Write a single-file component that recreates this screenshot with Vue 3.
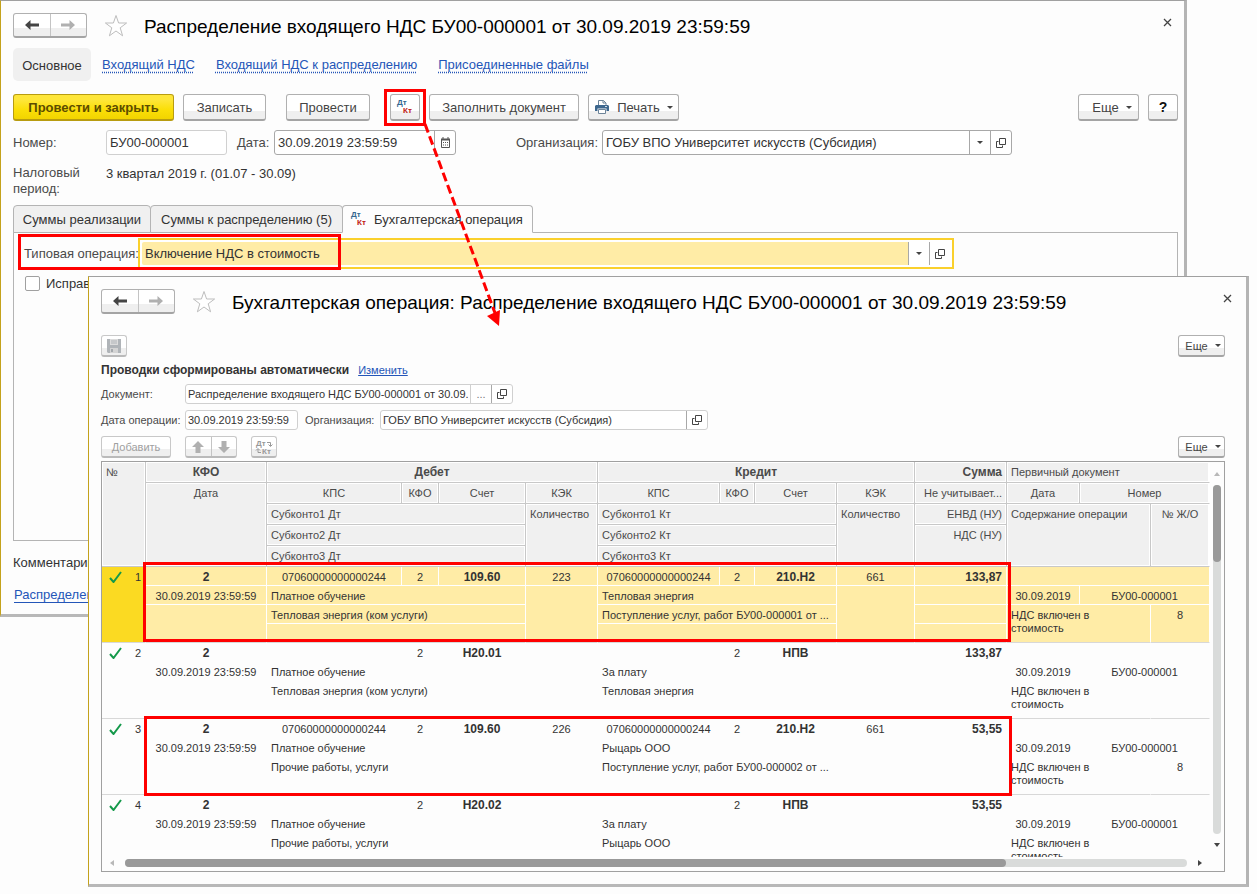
<script setup>
const head = {
  fund: 'КФО',
  sub: ['КПС', 'КФО', 'Счет', 'КЭК'],
}

const rows = [
  {
    n: 1, selected: true, kps: '07060000000000244', dt: '109.60', dtKek: '223', dt1: 'Платное обучение', dt2: 'Тепловая энергия (ком услуги)',
    kt: '210.Н2', ktKek: '661', kt1: 'Тепловая энергия', kt2: 'Поступление услуг, работ БУ00-000001 от ...', sum: '133,87', journal: '8',
  },
  {
    n: 2, kps: '', dt: 'Н20.01', dtKek: '', dt1: 'Платное обучение', dt2: 'Тепловая энергия (ком услуги)',
    kt: 'НПВ', ktKek: '', kt1: 'За плату', kt2: 'Тепловая энергия', sum: '133,87', journal: '',
  },
  {
    n: 3, kps: '07060000000000244', dt: '109.60', dtKek: '226', dt1: 'Платное обучение', dt2: 'Прочие работы, услуги',
    kt: '210.Н2', ktKek: '661', kt1: 'Рыцарь ООО', kt2: 'Поступление услуг, работ БУ00-000002 от ...', sum: '53,55', journal: '8',
  },
  {
    n: 4, kps: '', dt: 'Н20.02', dtKek: '', dt1: 'Платное обучение', dt2: 'Прочие работы, услуги',
    kt: 'НПВ', ktKek: '', kt1: 'За плату', kt2: 'Рыцарь ООО', sum: '53,55', journal: '',
  },
]
</script>

<template>
  <main class="desktop">
    <section class="window back">
      <header class="titlebar">
        <div class="history">
          <button type="button" aria-label="Назад"><svg width="16" height="12" viewBox="0 0 16 12"><path d="M1 6 6.500 1v3.500H15v3H6.500V11z" fill="#444" /></svg></button>
          <button type="button" aria-label="Вперед"><svg width="16" height="12" viewBox="0 0 16 12"><path d="M15 6 9.500 1v3.500H1v3h8.500V11z" fill="#b0b0b0" /></svg></button>
        </div>
        <button type="button" class="plain star" aria-label="В избранное"><svg width="24" height="24" viewBox="0 0 24 24"><path d="M12 1.500 14.600 9h8l-6.400 4.800 2.400 8L12 17l-6.600 4.800 2.400-8L1.400 9h8z" fill="#fff" stroke="#bdbdbd" /></svg></button>
        <h1>Распределение входящего НДС БУ00-000001 от 30.09.2019 23:59:59</h1>
        <button type="button" class="plain close" aria-label="Закрыть"><svg width="9" height="9" viewBox="0 0 9 9"><path d="M1 1l7 7M8 1 1 8" stroke="#444" stroke-width="1.300" /></svg></button>
      </header>

      <nav class="sections">
        <a class="current" href="#main">Основное</a>
        <a href="#vat">Входящий НДС</a>
        <a href="#split">Входящий НДС к распределению</a>
        <a href="#files">Присоединенные файлы</a>
      </nav>

      <div class="commands">
        <button type="button" class="btn primary">Провести и закрыть</button>
        <button type="button" class="btn save">Записать</button>
        <button type="button" class="btn post">Провести</button>
        <button type="button" class="btn dtkt" aria-label="Дт Кт">
          <svg width="20" height="20" viewBox="0 0 20 20"><text x="2" y="8" fill="#33678f">Дт</text><text x="8" y="16" fill="#c02010">Кт</text></svg>
          <span class="mark" />
        </button>
        <button type="button" class="btn fill">Заполнить документ</button>
        <button type="button" class="btn print">
          <svg width="16" height="16" viewBox="0 0 16 16"><path d="M4.500 6V1.500h5L12 4v2" fill="#fff" stroke="#6d8499" /><path d="M9 1.500V4h3" fill="none" stroke="#6d8499" /><path d="M2 6h12l1 1v5h-2.500V9.500h-9V12H1V7z" fill="#3d678e" /><path d="M11 7.500h2" stroke="#cfdce8" /><path d="M4.500 10.500h7v4h-7z" fill="#fff" stroke="#6d8499" /></svg>
          Печать <i class="caret" />
        </button>
        <button type="button" class="btn more">Еще <i class="caret" /></button>
        <button type="button" class="btn help">?</button>
      </div>

      <div class="line">
        <label class="caption" for="number">Номер:</label>
        <input id="number" class="box number" value="БУ00-000001" readonly>
        <label class="date-label" for="date">Дата:</label>
        <div class="box combo date">
          <input id="date" value="30.09.2019 23:59:59">
          <button type="button" aria-label="Календарь"><svg width="11" height="11" viewBox="0 0 11 11"><path d="M1.500 2.500h8v8h-8z" fill="#fff" stroke="#555" /><path d="M1 2.500h9" stroke="#555" stroke-width="2" /><path d="M3 0v2M8 0v2" stroke="#555" /><path d="M3 5.500h5M3 8h5" stroke="#555" stroke-dasharray="1 1" /></svg></button>
        </div>
        <label class="org-label" for="org">Организация:</label>
        <div class="box combo org">
          <input id="org" value="ГОБУ ВПО Университет искусств (Субсидия)">
          <button type="button" aria-label="Выбрать"><i class="caret" /></button>
          <button type="button" aria-label="Открыть"><svg width="10" height="10" viewBox="0 0 10 10"><path d="M3.500.500h6v6h-6zM2.500 3.500h-2v6h6v-2" fill="none" stroke="#444" /></svg></button>
        </div>
      </div>

      <div class="period">
        <span class="caption">Налоговый период:</span>
        <span class="value">3 квартал 2019 г. (01.07 - 30.09)</span>
      </div>

      <div class="tabs" role="tablist">
        <button type="button" role="tab" class="t1">Суммы реализации</button>
        <button type="button" role="tab" class="t2">Суммы к распределению (5)</button>
        <button type="button" role="tab" class="t3 on"><svg width="20" height="20" viewBox="0 0 20 20"><text x="1" y="8" fill="#33678f">Дт</text><text x="7" y="16" fill="#c02010">Кт</text></svg>Бухгалтерская операция</button>
      </div>
      <div class="panel">
        <div class="operation">
          <label for="operation">Типовая операция:</label>
          <div class="focused">
            <input id="operation" value="Включение НДС в стоимость">
            <button type="button" aria-label="Выбрать"><i class="caret" /></button>
            <button type="button" aria-label="Открыть"><svg width="10" height="10" viewBox="0 0 10 10"><path d="M3.500.500h6v6h-6zM2.500 3.500h-2v6h6v-2" fill="none" stroke="#444" /></svg></button>
          </div>
          <span class="mark" />
        </div>
        <label class="check"><input type="checkbox">Исправление</label>
      </div>
      <div class="comment">Комментарий:</div>
      <a class="footer-link" href="#doc">Распределение</a>
    </section>

    <section class="window front">
      <header class="titlebar">
        <div class="history">
          <button type="button" aria-label="Назад"><svg width="16" height="12" viewBox="0 0 16 12"><path d="M1 6 6.500 1v3.500H15v3H6.500V11z" fill="#444" /></svg></button>
          <button type="button" aria-label="Вперед"><svg width="16" height="12" viewBox="0 0 16 12"><path d="M15 6 9.500 1v3.500H1v3h8.500V11z" fill="#b0b0b0" /></svg></button>
        </div>
        <button type="button" class="plain star" aria-label="В избранное"><svg width="24" height="24" viewBox="0 0 24 24"><path d="M12 1.500 14.600 9h8l-6.400 4.800 2.400 8L12 17l-6.600 4.800 2.400-8L1.400 9h8z" fill="#fff" stroke="#bdbdbd" /></svg></button>
        <h2>Бухгалтерская операция: Распределение входящего НДС БУ00-000001 от 30.09.2019 23:59:59</h2>
        <button type="button" class="plain close" aria-label="Закрыть"><svg width="9" height="9" viewBox="0 0 9 9"><path d="M1 1l7 7M8 1 1 8" stroke="#444" stroke-width="1.300" /></svg></button>
      </header>

      <div class="tools first">
        <button type="button" class="btn icon off" aria-label="Записать"><svg width="14" height="14" viewBox="0 0 14 14"><path d="M0 0h14v14H1l-1-1z" fill="#b0b4b8" /><path d="M3 0h8v6H3z" fill="#dcdcdc" /><path d="M4 2h6M4 4h6" stroke="#b0b4b8" /><path d="M3 9h8v5H3z" fill="#d4d4d4" /><path d="M4 10h2v3H4z" fill="#a4a8ac" /></svg></button>
        <button type="button" class="btn more">Еще <i class="caret" /></button>
      </div>

      <div class="status"><strong>Проводки сформированы автоматически</strong><a href="#edit">Изменить</a></div>

      <div class="line">
        <label class="caption" for="doc">Документ:</label>
        <div class="box combo doc">
          <input id="doc" value="Распределение входящего НДС БУ00-000001 от 30.09." readonly>
          <button type="button" class="dots" aria-label="Выбрать">...</button>
          <button type="button" aria-label="Открыть"><svg width="10" height="10" viewBox="0 0 10 10"><path d="M3.500.500h6v6h-6zM2.500 3.500h-2v6h6v-2" fill="none" stroke="#444" /></svg></button>
        </div>
      </div>
      <div class="line">
        <label class="caption" for="opdate">Дата операции:</label>
        <input id="opdate" class="box opdate" value="30.09.2019 23:59:59" readonly>
        <label class="org-label" for="oporg">Организация:</label>
        <div class="box combo org">
          <input id="oporg" value="ГОБУ ВПО Университет искусств (Субсидия)" readonly>
          <button type="button" aria-label="Открыть"><svg width="10" height="10" viewBox="0 0 10 10"><path d="M3.500.500h6v6h-6zM2.500 3.500h-2v6h6v-2" fill="none" stroke="#444" /></svg></button>
        </div>
      </div>

      <div class="tools second">
        <button type="button" class="btn add off">Добавить</button>
        <div class="movers">
          <button type="button" aria-label="Вверх"><svg width="12" height="12" viewBox="0 0 12 12"><path d="M6 0l6 6H8.500v6h-5V6H0z" fill="#b0b0b0" /></svg></button>
          <button type="button" aria-label="Вниз"><svg width="12" height="12" viewBox="0 0 12 12"><path d="M6 12l6-6H8.500V0h-5v6H0z" fill="#b0b0b0" /></svg></button>
        </div>
        <button type="button" class="btn icon off swap" aria-label="Поменять Дт и Кт">
          <svg width="18" height="18" viewBox="0 0 18 18"><text x="1" y="8" fill="#999">Дт</text><text x="7" y="16" fill="#999">Кт</text><path d="M12 4.500h3.500V8M13.500 6.500l2 2 2-2M6 14.500H3V11M1 12.500l2-2 2 2" fill="none" stroke="#999" /></svg>
        </button>
        <button type="button" class="btn more">Еще <i class="caret" /></button>
      </div>

      <div class="grid">
        <div class="viewport">
          <table>
            <colgroup>
              <col class="w44"><col class="w121"><col class="w135"><col class="w37"><col class="w87"><col class="w72"><col class="w122">
              <col class="w35"><col class="w82"><col class="w78"><col class="w92"><col class="w73"><col class="w71"><col>
            </colgroup>
            <thead>
              <tr>
                <th rowspan="5" class="l">№</th>
                <th class="b">{{ head.fund }}</th>
                <th class="b" colspan="4">Дебет</th>
                <th class="b" colspan="4">Кредит</th>
                <th class="b r">Сумма</th>
                <th colspan="3" class="l last">Первичный документ</th>
              </tr>
              <tr>
                <th rowspan="4">Дата</th>
                <th v-for="s in head.sub" :key="'d' + s">{{ s }}</th>
                <th v-for="s in head.sub" :key="'k' + s">{{ s }}</th>
                <th class="r">Не учитывает...</th>
                <th>Дата</th>
                <th colspan="2" class="last">Номер</th>
              </tr>
              <tr>
                <th colspan="3" class="l">Субконто1 Дт</th>
                <th rowspan="3" class="l">Количество</th>
                <th colspan="3" class="l">Субконто1 Кт</th>
                <th rowspan="3" class="l">Количество</th>
                <th class="r">ЕНВД (НУ)</th>
                <th colspan="2" rowspan="3" class="l">Содержание операции</th>
                <th rowspan="3" class="last">№ Ж/О</th>
              </tr>
              <tr>
                <th colspan="3" class="l">Субконто2 Дт</th>
                <th colspan="3" class="l">Субконто2 Кт</th>
                <th rowspan="2" class="r">НДС (НУ)</th>
              </tr>
              <tr>
                <th colspan="3" class="l">Субконто3 Дт</th>
                <th colspan="3" class="l">Субконто3 Кт</th>
              </tr>
            </thead>
            <tbody v-for="r in rows" :key="r.n" :class="{ selected: r.selected }">
              <tr>
                <td rowspan="4" class="num end">
                  <div><svg width="13" height="12" viewBox="0 0 13 12"><path d="M1 7l3.500 4L12 1" fill="none" stroke="#14994a" stroke-width="2" /></svg>{{ r.n }}</div>
                </td>
                <td class="b">2</td>
                <td>{{ r.kps }}</td>
                <td>2</td>
                <td class="b">{{ r.dt }}</td>
                <td>{{ r.dtKek }}</td>
                <td>{{ r.kps }}</td>
                <td>2</td>
                <td class="b">{{ r.kt }}</td>
                <td>{{ r.ktKek }}</td>
                <td class="b r">{{ r.sum }}</td>
                <td colspan="3" />
              </tr>
              <tr>
                <td>30.09.2019 23:59:59</td>
                <td colspan="3" class="l">{{ r.dt1 }}</td>
                <td rowspan="3" class="end" />
                <td colspan="3" class="l">{{ r.kt1 }}</td>
                <td rowspan="3" class="end" />
                <td />
                <td>30.09.2019</td>
                <td colspan="2">БУ00-000001</td>
              </tr>
              <tr>
                <td rowspan="2" class="end" />
                <td colspan="3" class="l">{{ r.dt2 }}</td>
                <td colspan="3" class="l">{{ r.kt2 }}</td>
                <td />
                <td colspan="2" rowspan="2" class="l text end"><div>НДС включен в<br>стоимость</div></td>
                <td rowspan="2" class="end">{{ r.journal }}</td>
              </tr>
              <tr>
                <td colspan="3" class="end" />
                <td colspan="3" class="end" />
                <td class="end" />
              </tr>
            </tbody>
          </table>
          <span class="mark rec1" />
          <span class="mark rec3" />
        </div>
        <div class="vbar"><i class="up" /><div class="track"><div class="thumb" /></div><i class="down" /></div>
        <div class="hbar"><i class="left" /><div class="track"><div class="thumb" /></div><i class="right" /></div>
      </div>
    </section>

    <svg class="arrow" width="90" height="210" viewBox="0 0 90 210"><path d="M7 4 77 193" fill="none" stroke="#f00" stroke-width="3" stroke-dasharray="9 4" /><path d="M81 206 69 196l13-6z" fill="#f00" /></svg>
  </main>
</template>

<style>
body { margin: 0; background: #fff; }
</style>

<style scoped>
* { box-sizing: border-box; }
.desktop { position: relative; height: 100vh; overflow: hidden; background: #fdfdfd; font-family: "Liberation Sans", Arial, sans-serif; font-size: 13px; color: #333; }
button, input { font: inherit; color: inherit; margin: 0; }
button { padding: 0; }
svg { display: block; flex: none; }
svg text { font: bold 8px "Liberation Sans", Arial, sans-serif; }
h1, h2 { margin: 0; padding-top: 2px; font-size: 19px; font-weight: 400; color: #000; white-space: nowrap; }
a { color: #2456b8; }

.window { position: absolute; display: flex; flex-direction: column; background: #fdfdfd; border-top: 1px solid #a0a0a0; border-left: 1px solid #c4a21c; border-right: 3px solid #b4b4b4; border-bottom: 3px solid #b8b8b8; }
.back { top: 0; left: 0; right: 70px; bottom: 277px; padding: 12px 6px 12px 12px; }
.front { top: 276px; left: 88px; right: 8px; bottom: 7px; padding: 12px 21px 12px 12px; font-size: 11px; }

.titlebar { display: flex; align-items: center; height: 25px; flex: none; }
.history, .movers { display: flex; border: 1px solid #b0b0b0; border-bottom: 2px solid #a4a4a4; border-radius: 3px; background: linear-gradient(#fff 65%, #efefef 65%); }
.history { width: 74px; height: 25px; }
.history button, .movers button { flex: 1; display: flex; align-items: center; justify-content: center; border: 0; background: none; }
.history button + button, .movers button + button { border-left: 1px solid #c4c4c4; }
.plain { border: 0; background: none; }
.star { margin: 0 16px 0 17px; }
.close { margin-left: auto; margin-right: 6px; align-self: flex-start; padding: 5px 0; }
.front .close { margin-right: -7px; }

.sections { display: flex; align-items: center; gap: 21px; height: 33px; margin-top: 10px; flex: none; }
.sections a { line-height: 35px; text-decoration: underline dotted; text-underline-offset: 3px; white-space: nowrap; }
.sections .current { height: 33px; width: 78px; margin-right: -10px; text-align: center; border-radius: 5px; background: #f0f0f0; color: #333; text-decoration: none; }

.commands { display: flex; margin-top: 13px; height: 27px; flex: none; }
.btn { position: relative; display: flex; align-items: center; justify-content: center; gap: 7px; border: 1px solid #b0b0b0; border-bottom: 2px solid #a4a4a4; border-radius: 3px; background: linear-gradient(#fff 65%, #efefef 65%); color: #444; white-space: nowrap; }
.primary { width: 161px; margin-right: 9px; border-color: #b89c10; background: linear-gradient(#fee63a 0 20%, #fbdf08 60%, #f2d400); font-weight: 700; color: #5c4c00; }
.save { width: 83px; margin-right: 20px; }
.post { width: 84px; margin-right: 20px; }
.dtkt { width: 30px; margin-right: 9px; }
.fill { width: 150px; margin-right: 9px; }
.print { width: 91px; }
.back .more { width: 61px; margin-left: auto; margin-right: 9px; padding-left: 7px; }
.help { width: 30px; font-weight: 700; font-size: 14px; color: #111; }
.caret { border: 3px solid transparent; border-top-color: #444; border-bottom: 0; }

.line { display: flex; align-items: center; flex: none; color: #4a4a4a; }
.back .line { height: 25px; margin-top: 9px; }
.back .caption { width: 93px; flex: none; }
.box { border: 1px solid #a8a8a8; border-radius: 3px; background: #fff; color: #333; height: 25px; padding: 0 3px; }
.number { width: 121px; border-color: #d0d0d0; margin-right: 10px; }
.date-label { width: 37px; }
.combo { display: flex; padding: 0; }
.combo input { flex: 1; min-width: 0; border: 0; padding: 0 3px; background: none; }
.combo button { width: 21px; flex: none; border: 0; border-left: 1px solid #a8a8a8; background: none; display: flex; align-items: center; justify-content: center; }
.date { width: 182px; margin-right: 60px; }
.back .org-label { width: 86px; }
.back .org { width: 410px; }

.period { display: flex; margin-top: 10px; line-height: 16px; color: #4a4a4a; flex: none; }
.period .value { color: #333; padding-top: 1px; }

.tabs { display: flex; margin-top: 8px; height: 28px; flex: none; position: relative; }
.tabs button { border: 1px solid #b4b4b4; border-radius: 4px 4px 0 0; background: #f0f0f0; margin-right: -1px; white-space: nowrap; }
.t1 { width: 138px; }
.t2 { width: 193px; }
.tabs .on { display: flex; align-items: center; gap: 4px; width: 191px; padding-left: 7px; background: #fdfdfd; border-bottom-color: #fdfdfd; }
.panel { flex: 1; min-height: 0; margin-top: -1px; padding: 4px 10px; border: 1px solid #b4b4b4; }
.operation { position: relative; display: flex; align-items: center; height: 33px; color: #4a4a4a; }
.operation label { width: 114px; white-space: nowrap; }
.focused { display: flex; width: 816px; height: 31px; padding: 2px; border: 2px solid #fad02c; background: #fff; }
.focused input { flex: 1; min-width: 0; border: 0; padding: 0 3px; background: #ffeca6; border-radius: 2px 0 0 2px; color: #333; }
.focused button { width: 21px; display: flex; align-items: center; justify-content: center; border: 0; border-left: 1px solid #a8a8a8; background: none; }
.check { display: flex; align-items: center; gap: 6px; margin: 6px 0 0 1px; }
.check input { appearance: none; width: 15px; height: 15px; border: 1px solid #a0a0a0; border-radius: 2px; background: #fff; }
.comment { margin-top: 14px; flex: none; }
.footer-link { margin: 17px 0 0 1px; flex: none; text-underline-offset: 3px; align-self: flex-start; }

.tools { display: flex; flex: none; height: 22px; }
.first { margin-top: 21px; }
.second { margin-top: 6px; }
.front .more { width: 47px; margin-left: auto; padding-left: 3px; }
.icon { width: 26px; }
.off { color: #a0a0a0; border-color: #c8c8c8; border-bottom-color: #bababa; }
.status { display: flex; align-items: center; gap: 9px; height: 16px; margin: 5px 0 6px; flex: none; }
.status strong { font-size: 12px; color: #333; }
.front .line + .line { margin-top: 6px; }
.front .caption { width: 84px; white-space: nowrap; }
.front .box { height: 20px; border-color: #d0d0d0; padding: 0 2px; }
.front .combo { padding: 0; }
.front .combo input { padding: 0 2px; }
.front .doc { width: 328px; }
.front .dots { border-left-color: #d0d0d0; color: #777; }
.opdate { width: 113px; margin-right: 7px; }
.front .org-label { width: 75px; white-space: nowrap; }
.front .org { width: 328px; }
.add { width: 70px; margin-right: 14px; }
.movers { width: 52px; margin-right: 14px; border-color: #c8c8c8; border-bottom-color: #bababa; }

.grid { flex: 1; min-height: 0; margin-top: 3px; display: grid; grid-template-columns: 1fr 14px; grid-template-rows: 1fr 14px; border: 1px solid #a0a0a0; }
.viewport { position: relative; min-height: 0; overflow: hidden; }
table { width: 100%; table-layout: fixed; border-collapse: separate; border-spacing: 0; }
.w44 { width: 44px; } .w121 { width: 121px; } .w135 { width: 135px; } .w37 { width: 37px; } .w87 { width: 87px; } .w72 { width: 72px; } .w122 { width: 122px; }
.w35 { width: 35px; } .w82 { width: 82px; } .w78 { width: 78px; } .w92 { width: 92px; } .w73 { width: 73px; } .w71 { width: 71px; }
th, td { padding: 0 4px; vertical-align: top; text-align: center; white-space: nowrap; overflow: hidden; font-weight: 400; }
th { height: 21px; line-height: 20px; color: #4a4a4a; background: #f0f0f0; border-right: 1px solid #c8c8c8; border-bottom: 1px solid #c8c8c8; box-shadow: inset 0 0 0 1px #fff; }
th.last { border-right-color: #fff; }
td { height: 19px; line-height: 16px; padding-top: 2px; border-right: 1px solid transparent; border-bottom: 1px solid transparent; background-clip: padding-box; }
.l { text-align: left; }
.r { text-align: right; }
.b { font-weight: 700; font-size: 12px; }
td.end { border-bottom-color: #d8d8d8; }
.selected td { background-color: #ffeca6; border-right-color: #fff; border-bottom-color: #fff; }
.selected td.num { background-color: #fbda22; }
.selected td.end { border-bottom-color: #d8d8d8; }
.num div { display: flex; justify-content: space-between; align-items: center; padding-left: 3px; }
.text div { line-height: 13px; padding-top: 2px; }

.vbar { display: flex; flex-direction: column; align-items: center; gap: 9px; padding: 10px 1px 10px 0; }
.hbar { grid-column: 1 / -1; display: flex; align-items: center; gap: 11px; padding: 0 22px 2px 8px; }
.track { flex: 1; border-radius: 4px; background: #d9dbda; }
.vbar .track { width: 8px; }
.hbar .track { height: 8px; }
.thumb { border-radius: 4px; background: #999; }
.vbar .thumb { height: 22%; }
.hbar .thumb { width: 83%; height: 8px; }
.vbar i, .hbar i { border: 3px solid transparent; }
.vbar .up { border-top: 0; border-bottom: 4px solid #b8b8b8; }
.vbar .down { border-bottom: 0; border-top: 4px solid #444; }
.hbar .left { border-left: 0; border-right: 4px solid #b8b8b8; }
.hbar .right { border-right: 0; border-left: 4px solid #444; }

.mark { position: absolute; border: 3px solid #f00; pointer-events: none; }
.dtkt .mark { inset: -6px -7px -7px -7px; }
.operation .mark { left: -6px; top: -3px; width: 323px; height: 36px; }
.rec1 { left: 41px; top: 100px; width: 868px; height: 80px; }
.rec3 { left: 42px; top: 254px; width: 868px; height: 80px; }
.arrow { position: absolute; left: 418px; top: 120px; pointer-events: none; }
</style>
